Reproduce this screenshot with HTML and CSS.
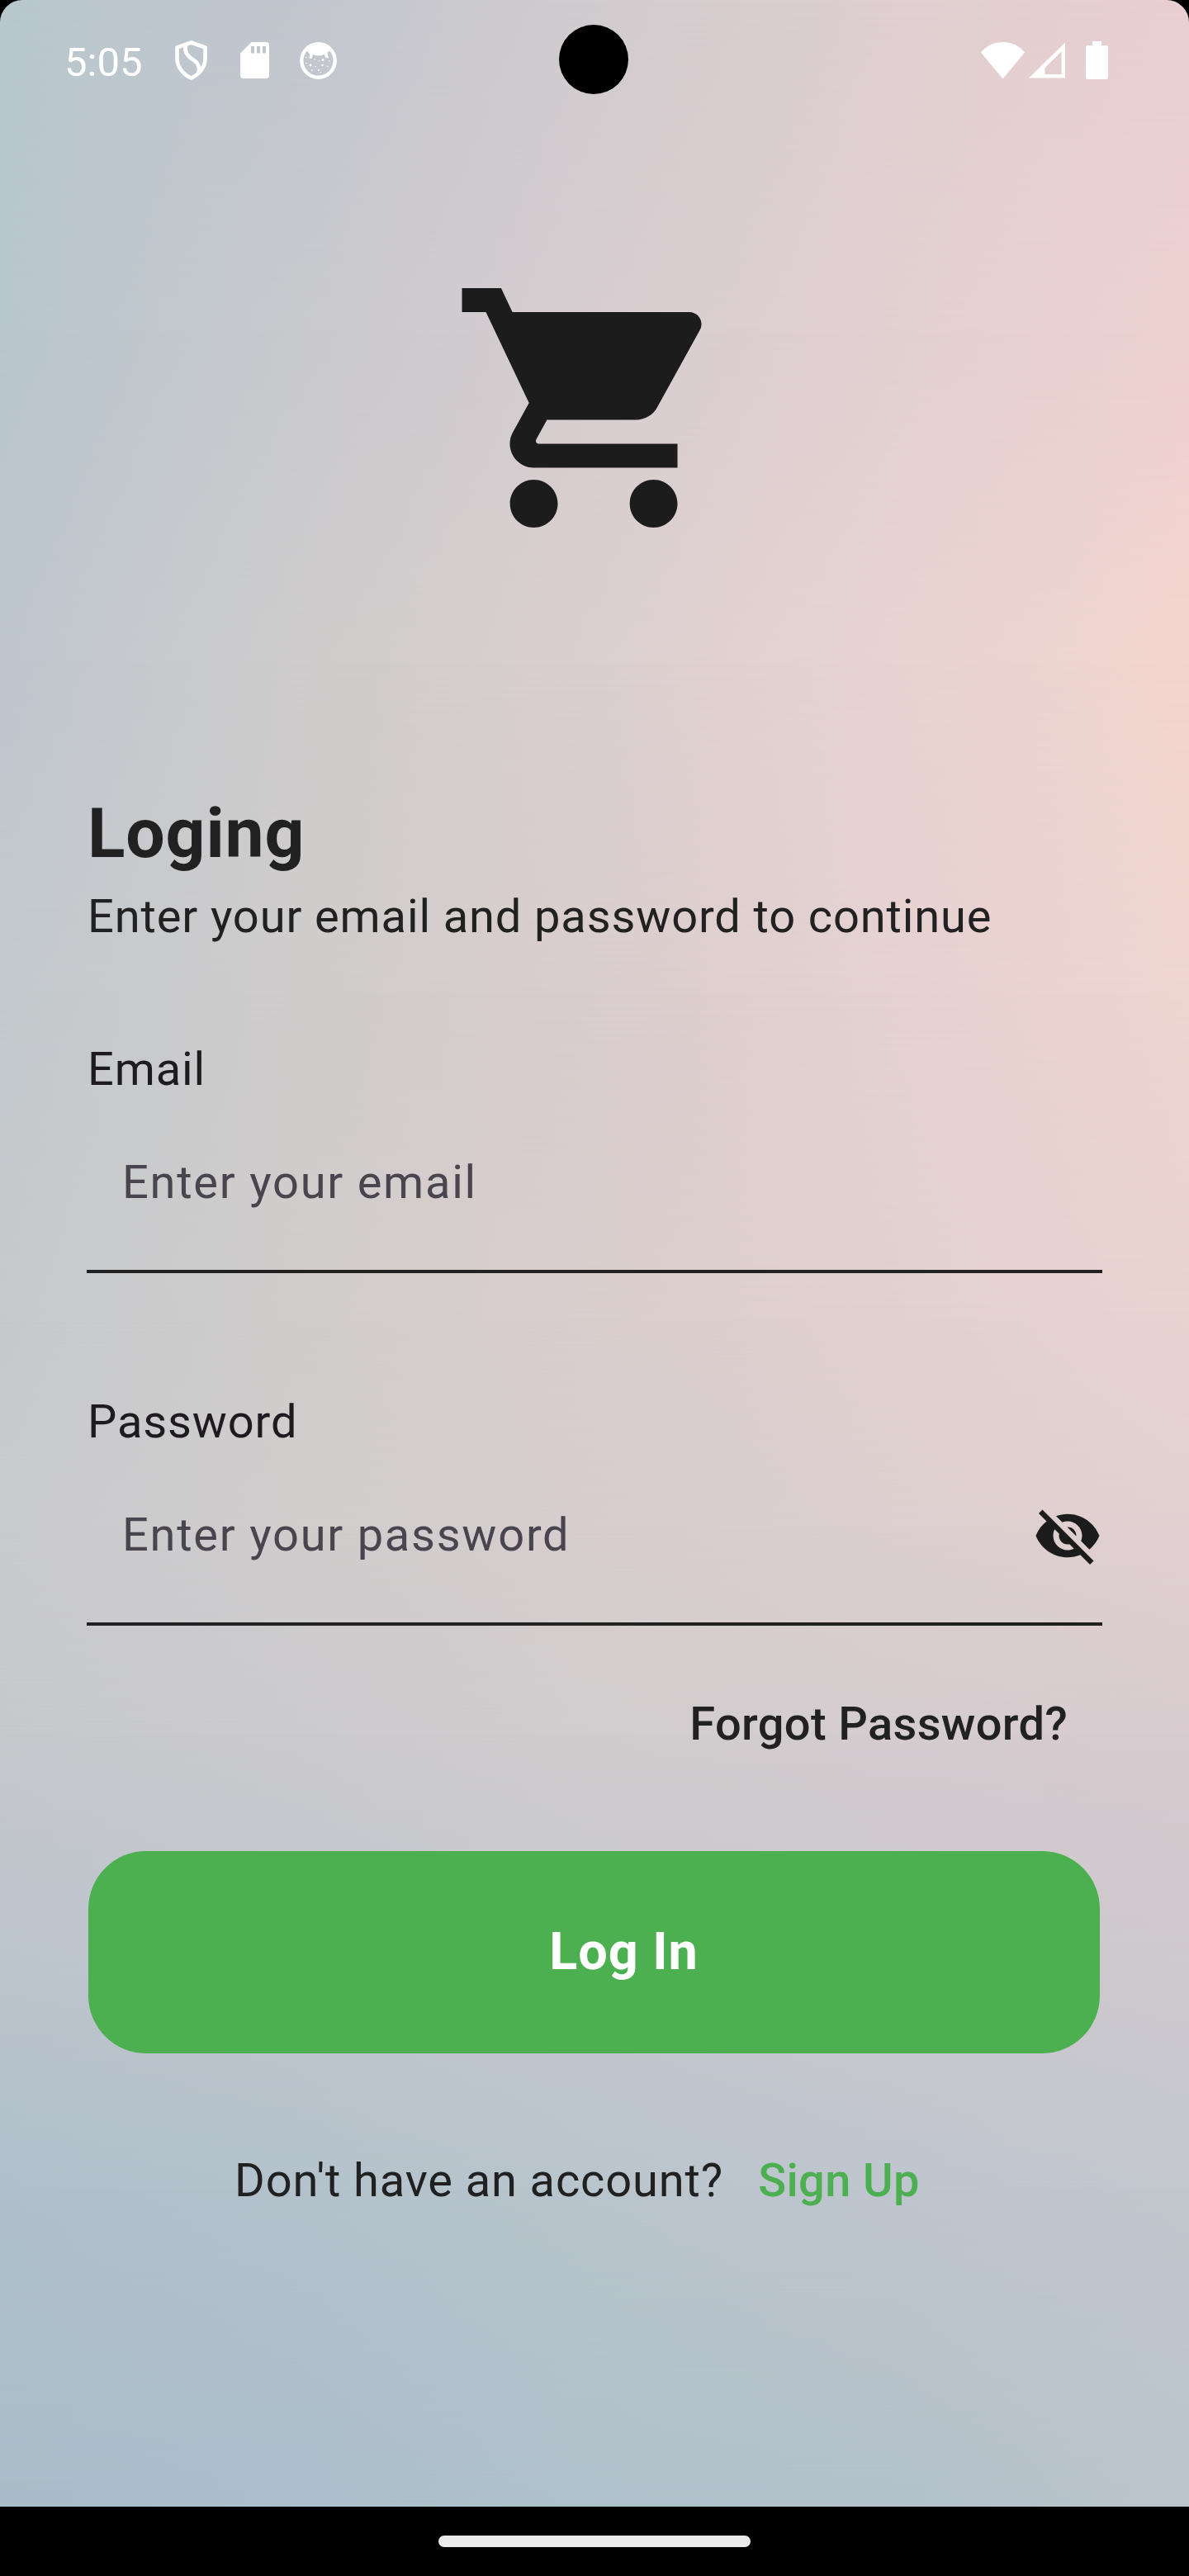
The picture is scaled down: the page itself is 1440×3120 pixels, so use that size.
FILE: index.html
```html
<!DOCTYPE html>
<html lang="en">
<head>
<meta charset="utf-8">
<title>Log in</title>
<link rel="stylesheet" href="styles.css">
</head>
<body>
<div class="phone">
  <div class="screen">
    <div class="backdrop">
      <i class="band b0"></i><i class="band b1"></i><i class="band b2"></i><i class="band b3"></i><i class="band b4"></i>
      <i class="band b5"></i><i class="band b6"></i><i class="band b7"></i><i class="band b8"></i><i class="band b9"></i>
    </div>
    <div class="camera"></div>

    <header class="status">
      <div class="status-left">
        <span class="clock">5:05</span>
        <svg class="i-shield" viewBox="0 0 39 48" fill="none" stroke="#fff" stroke-width="4.6" stroke-linejoin="round"><path d="M19.500 2.500 36.500 8.500V22C36.500 32 29.500 41 19.500 45.500 9.500 41 2.500 32 2.500 22V8.500Z"/><path d="M13 5.500C11 13 14 18 20.500 22.500 27.500 27 30.500 31 28.500 38.500"/></svg>
        <svg class="i-sd" viewBox="0 0 35 44" fill="#fff" fill-rule="evenodd"><path d="M13.500 0H31a4 4 0 0 1 4 4V40a4 4 0 0 1-4 4H4a4 4 0 0 1-4-4V13.500ZM13 5v8.500h4V5ZM20 5v8.500h4V5ZM27 5v8.500h4V5Z"/></svg>
        <svg class="i-face" viewBox="0 0 45 45"><circle cx="22.500" cy="22.500" r="20.200" fill="none" stroke="#fff" stroke-width="4.400"/><path d="M8 9C14 0 31 0 37 9L33.500 13 35 19.500 31.500 19 29.500 15Q22.500 18 16 15L14.500 20 11.500 19.500 12 14.500Z" fill="#fff"/><g fill="#fff"><circle cx="8" cy="18.500" r=".8"/><circle cx="18" cy="20.500" r=".8"/><circle cx="28" cy="21.500" r="1.400"/><circle cx="23" cy="23" r=".7"/><circle cx="36" cy="23" r=".8"/><circle cx="8" cy="25.500" r=".8"/><circle cx="13" cy="28" r="1.400"/><circle cx="19" cy="29.500" r=".8"/><circle cx="27.500" cy="28" r="1.200"/><circle cx="34" cy="29.500" r=".8"/><circle cx="15" cy="34" r=".8"/><circle cx="23" cy="34" r="1"/><circle cx="25.500" cy="36.500" r=".8"/></g></svg>
      </div>
      <div class="status-right">
        <svg class="i-wifi" viewBox="0 0 53 45" fill="#fff"><path d="M26.500 44.500 0 12.500C7 4 16 0 26.500 0S46 4 53 12.500Z"/></svg>
        <svg class="i-signal" viewBox="0 0 45 44" fill="#fff" fill-rule="evenodd"><path d="M45 0V44H0ZM40.500 11 20 31.500V39.500H40.500Z"/></svg>
        <svg class="i-battery" viewBox="0 0 27 46" fill="#fff"><path d="M8 0H19V5H24.500Q27 5 27 7.500V43Q27 46 24.500 46H2.500Q0 46 0 43V7.500Q0 5 2.500 5H8Z"/></svg>
      </div>
    </header>

    <main class="content">
      <svg class="cart" viewBox="0 0 24 24" fill="#1d1c1c"><path d="M7 18c-1.100 0-1.990.9-1.990 2S5.900 22 7 22s2-.9 2-2-.9-2-2-2zM1 2v2h2l3.600 7.590-1.350 2.450c-.16.28-.25.61-.25.96 0 1.100.9 2 2 2h12v-2H7.420c-.14 0-.25-.11-.25-.25l.03-.12.9-1.630h7.450c.75 0 1.410-.41 1.750-1.030l3.580-6.490c.08-.14.12-.31.12-.48 0-.55-.45-1-1-1H5.210l-.94-2H1zm16 16c-1.100 0-1.990.9-1.990 2s.89 2 1.990 2 2-.9 2-2-.9-2-2-2z"/></svg>
      <h1 class="title">Loging</h1>
      <p class="subtitle">Enter your email and password to continue</p>

      <div class="label">Email</div>
      <div class="field"><span class="hint">Enter your email</span></div>

      <div class="label label-password">Password</div>
      <div class="field">
        <span class="hint">Enter your password</span>
        <svg class="eye" viewBox="0 0 24 24" fill="#1d1c1c"><path d="M12 7c2.760 0 5 2.240 5 5 0 .65-.13 1.260-.36 1.830l2.920 2.920c1.510-1.260 2.700-2.890 3.430-4.750-1.730-4.390-6-7.500-11-7.500-1.400 0-2.740.25-3.980.7l2.160 2.160C10.740 7.130 11.350 7 12 7zM2 4.270l2.280 2.280.46.46C3.080 8.300 1.780 10.020 1 12c1.730 4.390 6 7.500 11 7.500 1.550 0 3.030-.3 4.380-.84l.42.42L19.730 22 21 20.730 3.270 3 2 4.270zM7.530 9.800l1.550 1.550c-.05.21-.08.43-.08.65 0 1.660 1.340 3 3 3 .22 0 .44-.03.65-.08l1.550 1.550c-.67.33-1.410.53-2.200.53-2.760 0-5-2.240-5-5 0-.79.2-1.530.53-2.200zm4.310-.78l3.150 3.150.02-.16c0-1.660-1.340-3-3-3l-.17.01z"/></svg>
      </div>

      <div class="forgot">Forgot Password?</div>
      <div class="login">Log In</div>
      <div class="signup"><span>Don't have an account?</span><span class="signup-link">Sign Up</span></div>
    </main>
  </div>
  <footer class="navbar"><div class="handle"></div></footer>
</div>
</body>
</html>
```
FILE: styles.css
```css
* { box-sizing: border-box; margin: 0; padding: 0; }
body { background: #000; font-family: Roboto, "Liberation Sans", sans-serif; }
svg { display: block; flex: none; }

.phone { width: 1440px; height: 3120px; display: flex; flex-direction: column; background: #000; }
.screen { position: relative; height: 3036px; border-radius: 27px 27px 0 0; overflow: hidden; }

/* Colour mesh: each band fades in over the previous one */
.backdrop { position: absolute; inset: 0; }
.band { position: absolute; inset: 0; }
.b0 { background: linear-gradient(90deg, #b8c8cd, #c2c6ce, #d1cccf, #dfcfd0, #e9cfd1); }
.b1 { background: linear-gradient(90deg, #b8c6ce, #c8c9cd, #d7cdd0, #e2d0d1, #eed1d1); -webkit-mask-image: linear-gradient(transparent 0, #000 400px); mask-image: linear-gradient(transparent 0, #000 400px); }
.b2 { background: linear-gradient(90deg, #bfc6ce, #cecccc, #dbcfcf, #e7d3d1, #f3d5ce); -webkit-mask-image: linear-gradient(transparent 400px, #000 800px); mask-image: linear-gradient(transparent 400px, #000 800px); }
.b3 { background: linear-gradient(90deg, #c3c9cd, #cfcccc, #dacdcd, #e5d1d1, #efd5d0); -webkit-mask-image: linear-gradient(transparent 800px, #000 1200px); mask-image: linear-gradient(transparent 800px, #000 1200px); }
.b4 { background: linear-gradient(90deg, #c6c9cc, #d0cdcc, #dacecd, #e1d0d0, #e8d3d1); -webkit-mask-image: linear-gradient(transparent 1200px, #000 1600px); mask-image: linear-gradient(transparent 1200px, #000 1600px); }
.b5 { background: linear-gradient(90deg, #c9cacd, #d0cdcd, #d7cdce, #ddcfcf, #e1d0d1); -webkit-mask-image: linear-gradient(transparent 1600px, #000 1850px); mask-image: linear-gradient(transparent 1600px, #000 1850px); }
.b6 { background: linear-gradient(90deg, #c6c8cc, #cbcacd, #d1cdce, #d4cccf, #d8cbcf); -webkit-mask-image: linear-gradient(transparent 1850px, #000 2100px); mask-image: linear-gradient(transparent 1850px, #000 2100px); }
.b7 { background: linear-gradient(90deg, #bbc4cd, #bfc5ce, #c5c7ce, #cac8ce, #cdc9ce); -webkit-mask-image: linear-gradient(transparent 2100px, #000 2400px); mask-image: linear-gradient(transparent 2100px, #000 2400px); }
.b8 { background: linear-gradient(90deg, #afc0ca, #b3c2cb, #b9c5cd, #bfc5ce, #c3c7ce); -webkit-mask-image: linear-gradient(transparent 2400px, #000 2650px); mask-image: linear-gradient(transparent 2400px, #000 2650px); }
.b9 { background: linear-gradient(90deg, #a9bcc9, #abbdcb, #afc1ca, #b2c1ca, #bac4cc); -webkit-mask-image: linear-gradient(transparent 2650px, #000 3036px); mask-image: linear-gradient(transparent 2650px, #000 3036px); }

.camera { position: absolute; left: 677px; top: 30px; width: 84px; height: 84px; border-radius: 50%; background: #000; }

.status { position: relative; height: 146px; padding: 0 98px 0 78px; display: flex; justify-content: space-between; align-items: center; color: #fff; }
.status-left, .status-right { display: flex; align-items: center; }
.clock { width: 134px; font-size: 49px; line-height: 60px; padding-top: 6px; }
.i-shield { width: 39px; height: 48px; margin-right: 40px; }
.i-sd { width: 35px; height: 44px; margin-right: 37px; }
.i-face { width: 45px; height: 45px; }
.i-wifi { width: 53px; height: 45px; margin-right: 5px; }
.i-signal { width: 44px; height: 44px; margin-right: 25px; }
.i-battery { width: 27px; height: 46px; }

.content { position: relative; padding: 174px 105px 0; display: flex; flex-direction: column; color: #212121; font-size: 56px; line-height: 84px; letter-spacing: 0.875px; }
.cart { width: 348px; height: 348px; margin-left: 440px; }
.title { margin-top: 286px; font-size: 84px; line-height: 112px; font-weight: 700; }
.subtitle { margin-top: 2px; }
.title, .subtitle, .label { padding-left: 1px; white-space: nowrap; }
.label { margin-top: 101px; color: #1d1b20; }
.label-password { margin-top: 138px; }
.field { height: 205px; padding: 53px 0 0 43px; border-bottom: 4px solid #212121; display: flex; justify-content: space-between; align-items: flex-start; }
.hint { color: #49454f; letter-spacing: 1.75px; }
.eye { width: 84px; height: 84px; margin-top: 1px; }
.forgot { margin-top: 77px; padding-right: 42px; text-align: right; font-weight: 500; letter-spacing: 0.35px; }
.login { margin: 112px 3px 0 2px; height: 245px; border-radius: 70px; padding: 0 0 2px 72px; display: flex; align-items: center; justify-content: center; background: #4caf50; color: #fff; font-size: 63px; font-weight: 700; }
.signup { margin-top: 112px; padding-left: 179px; display: flex; gap: 42px; white-space: nowrap; }
.signup-link { color: #4caf50; font-weight: 500; letter-spacing: 0.35px; }

.navbar { height: 84px; display: flex; justify-content: center; align-items: center; }
.handle { width: 378px; height: 14px; border-radius: 7px; background: #ebebeb; }
```
